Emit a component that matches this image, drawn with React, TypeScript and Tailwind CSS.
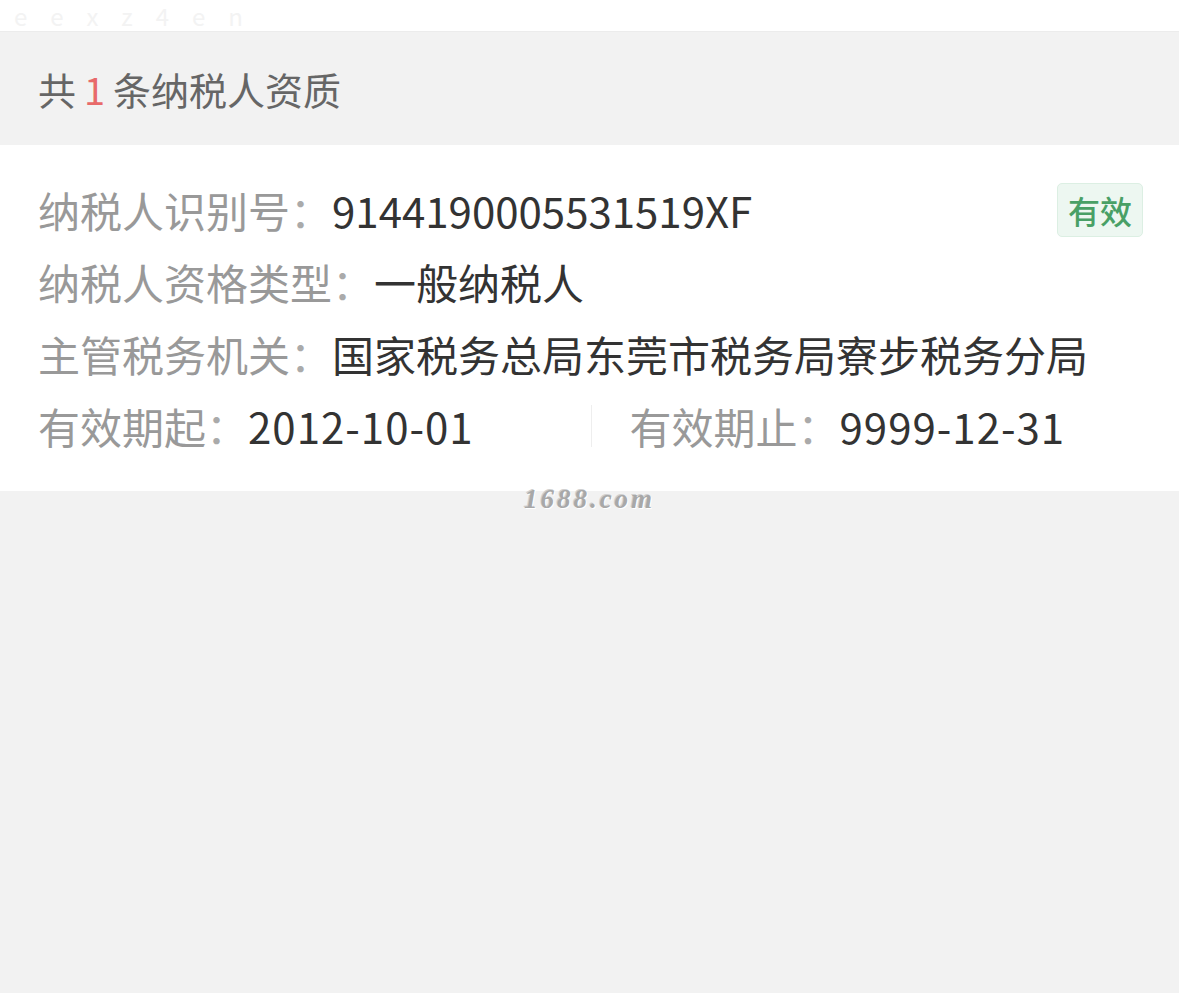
import React from 'react';

const FONT = { fontFamily: '"Noto Sans CJK SC", "Noto Sans", sans-serif' };

function Label({ text }: { text: string }) {
  return (
    <span className="text-[#999999]">
      {text}
      <span className="text-[#aaaaaa]">：</span>
    </span>
  );
}

function Row({ label, value, extra }: { label: string; value: string; extra?: React.ReactNode }) {
  return (
    <div className="flex items-center justify-between h-[72px]">
      <div className="flex items-center whitespace-nowrap">
        <Label text={label} />
        <span className="text-[#333333]">{value}</span>
      </div>
      {extra}
    </div>
  );
}

export default function App() {
  return (
    <div className="min-h-screen bg-[#f2f2f2] text-[42px]" style={FONT}>
      <div className="h-[32px] bg-white border-b border-[#ececec]">
        <div className="pl-[14px] text-[24px] leading-[31px] tracking-[23px] text-[#f3f3f3]">eexz4en</div>
      </div>

      <div className="h-[113px] flex items-center px-[38px] text-[38px] text-[#666666]">
        共<span className="text-[#e86a6a] mx-[8px]">1</span>条纳税人资质
      </div>

      <div className="relative">
        <div className="bg-white pl-[38px] pr-[36px] py-[29px] leading-[72px]">
          <Row
            label="纳税人识别号"
            value="9144190005531519XF"
            extra={
              <span className="h-[54px] px-[10px] flex items-center rounded-[5px] border border-[#dcefe3] bg-[#edf7f1] text-[#49a066] text-[32px] font-medium leading-none">
                有效
              </span>
            }
          />
          <Row label="纳税人资格类型" value="一般纳税人" />
          <Row label="主管税务机关" value="国家税务总局东莞市税务局寮步税务分局" />
          <div className="flex items-center h-[72px] whitespace-nowrap">
            <div className="flex-1">
              <Label text="有效期起" />
              <span className="text-[#333333] tracking-[1px]">2012-10-01</span>
            </div>
            <div className="flex-1 flex items-center">
              <div className="w-px h-[42px] bg-[#eeeeee] mr-[38px]" />
              <Label text="有效期止" />
              <span className="text-[#333333] tracking-[1px]">9999-12-31</span>
            </div>
          </div>
        </div>
        <div
          className="absolute left-0 right-0 top-[341px] text-center text-[27px] leading-none italic font-bold text-[#a8a8a8] tracking-[3px] [text-shadow:1px_1px_0_#ffffff,-1px_-1px_0_#d0d0d0]"
          style={{ fontFamily: '"Liberation Serif", serif' }}
        >
          1688.com
        </div>
      </div>
    </div>
  );
}
